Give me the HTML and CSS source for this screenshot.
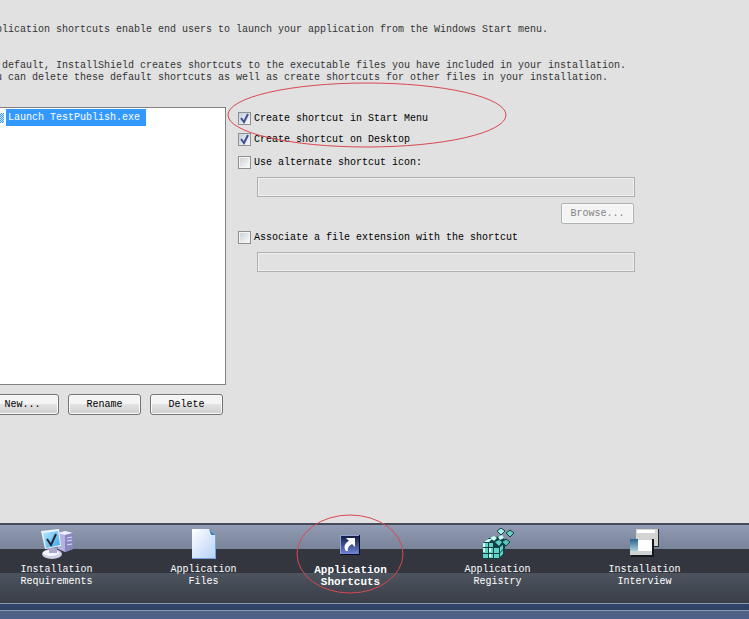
FILE: index.html
```html
<!DOCTYPE html>
<html lang="en">
<head>
    <meta charset="UTF-8">
    <meta name="viewport" content="width=device-width, initial-scale=1.0">
    <title>Application Shortcuts</title>
    <link rel="stylesheet" href="styles.css">
</head>
<body>
    <main class="content">
        <p class="intro">Application shortcuts enable end users to launch your application from the Windows Start menu.</p>
        <p class="intro">By default, InstallShield creates shortcuts to the executable files you have included in your installation.<br>
        You can delete these default shortcuts as well as create shortcuts for other files in your installation.</p>

        <div class="columns">
            <div class="shortcuts">
                <ul class="shortcut-list">
                    <li class="selected"><span class="file-icon"></span><span class="file-name">Launch TestPublish.exe</span></li>
                </ul>
                <div class="button-group">
                    <button type="button">New...</button>
                    <button type="button">Rename</button>
                    <button type="button">Delete</button>
                </div>
            </div>

            <form class="options">
                <div class="marked">
                    <label class="option"><input type="checkbox" checked>Create shortcut in Start Menu</label>
                    <label class="option"><input type="checkbox" checked>Create shortcut on Desktop</label>
                    <svg class="mark mark-options" viewBox="0 0 280 67"><ellipse cx="140" cy="33" rx="139" ry="32"/></svg>
                </div>
                <label class="option option-field"><input type="checkbox">Use alternate shortcut icon:</label>
                <input class="field" type="text" aria-label="Alternate shortcut icon" disabled>
                <button class="browse" type="button" disabled>Browse...</button>
                <label class="option option-field"><input type="checkbox">Associate a file extension with the shortcut</label>
                <input class="field" type="text" aria-label="File extension" disabled>
            </form>
        </div>
    </main>

    <nav class="steps">
        <div class="step-row">
            <a class="step" href="#requirements">
                <svg width="34" height="32" viewBox="0 0 34 32">
                    <defs>
                        <linearGradient id="screen" x1="0" y1="0" x2="1" y2="1"><stop offset="0" stop-color="#b9ecff"/><stop offset="1" stop-color="#38a2ec"/></linearGradient>
                    </defs>
                    <path d="M18 5l7-2 8 2v16l-8 3-7-3z" fill="#b5b4e0"/>
                    <path d="M18 5l7-2 8 2-8 2z" fill="#eeecff"/>
                    <path d="M25 7l8-2v16l-8 3z" fill="#8a87c0"/>
                    <path d="M27 10l5-1M27 13l5-1M27 17l5-1" stroke="#dcdaf8"/>
                    <ellipse cx="12" cy="26" rx="10" ry="5" fill="#d0d0e6"/>
                    <ellipse cx="11" cy="25" rx="8" ry="3" fill="#f7f7ff"/>
                    <path d="M9 20h8v5H9z" fill="#aaa8ce"/>
                    <path d="M1 3l18-2 2 17-16 3z" fill="#e8f4ff"/>
                    <path d="M3 5l15-2 2 14-14 3z" fill="url(#screen)"/>
                    <path d="M7 11l4 6 5-11" fill="none" stroke="#272536" stroke-width="2"/>
                </svg>
                <span>Installation<br>Requirements</span>
            </a>
            <a class="step" href="#files">
                <svg width="34" height="32" viewBox="0 0 34 32">
                    <defs>
                        <linearGradient id="paper" x1="0" y1="0" x2="1" y2="1"><stop offset="0" stop-color="#fff"/><stop offset="1" stop-color="#b4d0f8"/></linearGradient>
                    </defs>
                    <path d="M5 1h17l7 6v24H5z" fill="url(#paper)"/>
                    <path d="M28.500 7v23.500H5" fill="none" stroke="#7c9fda"/>
                    <path d="M22 1l7 6h-5z" fill="#4a82b8"/>
                </svg>
                <span>Application<br>Files</span>
            </a>
            <a class="step current" href="#shortcuts">
                <svg width="34" height="32" viewBox="0 0 34 32">
                    <defs>
                        <linearGradient id="arrow-bg" x1="0" y1="0" x2="0" y2="1"><stop offset="0" stop-color="#111d45"/><stop offset="1" stop-color="#7185d6"/></linearGradient>
                    </defs>
                    <path d="M6 7h20v20H6z" fill="#080c20"/>
                    <path d="M6 7h19v19H6z" fill="#95a5d7"/>
                    <path d="M7 8h18v18H7z" fill="url(#arrow-bg)"/>
                    <path d="M12 10h9v9l-3-3c-3 2-5 4-4 7h-2c-3-4-1-8 3-10z" fill="#fff"/>
                </svg>
                <span>Application<br>Shortcuts</span>
                <svg class="mark mark-step" viewBox="0 0 108 82"><ellipse cx="54" cy="41" rx="53" ry="39"/></svg>
            </a>
            <a class="step" href="#registry">
                <svg width="34" height="32" viewBox="0 0 34 32">
                    <path d="M2 15l6-5 13-2 4 5-2 13-5 5H2z" fill="#123f44"/>
                    <g fill="#5fd3c8">
                        <path d="M2 15h5v4H2zM8 15h4v4H8zM2 20h5v5H2zM8 20h4v5H8zM13 20h5v5h-5zM2 26h5v4H2zM8 26h4v4H8zM13 26h5v4h-5z"/>
                        <path d="M19 19l3-2v4l-3 3zM19 25l3-3v4l-3 3zM14 14l4-2 3 2-3 4z"/>
                    </g>
                    <path d="M3 14l4-3h4l-3 3zM9 10l4-2 3 2-3 3zM17 9l4-2 2 3-4 2zM2 15h2v4H2zM2 20h2v4H2zM8 20h2v4H8zM8 26h2v3H8z" fill="#cafff4"/>
                    <g stroke="#123f44">
                        <path d="M20 0l4 3-4 4-4-4z" fill="#a4eee5"/>
                        <path d="M29 2l4 3-4 4-4-4z" fill="#66cfc4"/>
                        <path d="M25 11l4 3-4 4-4-4z" fill="#55c4bc"/>
                    </g>
                </svg>
                <span>Application<br>Registry</span>
            </a>
            <a class="step" href="#interview">
                <svg width="34" height="32" viewBox="0 0 34 32">
                    <defs>
                        <linearGradient id="side" x1="0" y1="0" x2="0" y2="1"><stop offset="0" stop-color="#286393"/><stop offset="1" stop-color="#adced9"/></linearGradient>
                    </defs>
                    <path d="M9 1h22v18H9z" fill="#252a30"/>
                    <path d="M8 1h22v17H8z" fill="#d4d4d2"/>
                    <path d="M9 2h18v3H9z" fill="#fff"/>
                    <path d="M3 11h23v18H3z" fill="#16191e"/>
                    <path d="M2 11h22v16H2z" fill="#d0d2d2"/>
                    <path d="M10 12h14v11H10z" fill="#fff"/>
                    <path d="M2 11h8v12H2z" fill="url(#side)"/>
                </svg>
                <span>Installation<br>Interview</span>
            </a>
        </div>
    </nav>
    <footer class="status"></footer>
</body>
</html>
```

FILE: styles.css
```css
* {
    box-sizing: border-box;
}
body {
    font-family: "Liberation Mono", monospace;
    font-size: 10px;
    line-height: 12px;
    color: #000;
    background-color: #e1e1e1;
    display: flex;
    flex-direction: column;
    min-height: 100vh;
    margin: 0;
    overflow-x: hidden;
}
/* the panel runs off the left edge of the window */
.content {
    flex: 1;
    margin-left: -16px;
    padding-top: 24px;
}
.intro {
    margin: 0 0 24px;
    color: #333;
    white-space: nowrap;
}
.intro + .intro {
    margin-bottom: 23px;
}
.columns {
    display: flex;
    gap: 12px;
}
.shortcuts {
    width: 242px;
}
.shortcut-list {
    height: 278px;
    margin: 0 0 9px;
    padding: 1px 1px 1px 15px;
    list-style: none;
    background-color: #fff;
    border: 1px solid #828282;
}
.selected {
    display: flex;
    align-items: center;
    height: 17px;
}
.file-icon {
    width: 4px;
    height: 10px;
    background: repeating-conic-gradient(#3399ff 0 25%, #d5eaff 0 50%) 0 0 / 2px 2px;
}
.file-name {
    padding: 3px 6px 2px 2px;
    margin-left: 2px;
    color: #fff;
    background-color: #3399ff;
}
.button-group {
    display: flex;
    justify-content: flex-end;
    gap: 9px;
    padding-right: 3px;
}
button {
    width: 73px;
    height: 21px;
    padding: 0;
    font: inherit;
    color: #000;
    background: linear-gradient(#f4f4f4 0 45%, #e2e2e2 50%, #cfcfcf);
    border: 1px solid #747474;
    border-radius: 3px;
    box-shadow: inset 0 0 0 1px #fafafa;
}
button:disabled {
    color: #838383;
    background: #f4f4f4;
    border-color: #adb2b5;
}
.options {
    display: flex;
    flex-direction: column;
    width: 397px;
    padding-top: 4px;
}
.marked {
    position: relative;
    display: flex;
    flex-direction: column;
    gap: 6px;
}
.option {
    display: flex;
    align-items: center;
    gap: 3px;
    height: 15px;
}
.option-field {
    margin-top: 8px;
}
.option input {
    appearance: none;
    width: 13px;
    height: 13px;
    margin: 0;
    border: 1px solid #8e8f8f;
    background: linear-gradient(135deg, #cfd3d8, #f8f8f8) content-box, #f4f4f4;
    padding: 1px;
}
.option input:checked {
    background: url("data:image/svg+xml,%3Csvg xmlns='http://www.w3.org/2000/svg' viewBox='0 0 11 11'%3E%3Cpath d='M2 5l3 4 4-8' fill='none' stroke='%23434d91' stroke-width='2'/%3E%3C/svg%3E") padding-box, linear-gradient(135deg, #c4d0df, #f5f8fa);
}
.field {
    height: 20px;
    margin: 7px 0 0 19px;
    padding: 0 4px;
    font: inherit;
    background-color: #e1e1e1;
    border: 1px solid #afafaf;
    box-shadow: inset 0 0 0 1px #f0f0f0;
}
.browse {
    align-self: flex-end;
    margin: 6px 1px 0 0;
    border-radius: 2px;
}
.browse + .option-field {
    margin-top: 6px;
}
.mark {
    position: absolute;
    overflow: visible;
    fill: none;
    stroke: #d9484f;
    pointer-events: none;
}
.mark-options {
    top: -29px;
    left: -11px;
    width: 280px;
    height: 67px;
}
.mark-step {
    top: -12px;
    left: 19px;
    width: 108px;
    height: 82px;
}
.steps {
    height: 80px;
    border-top: 2px solid #454b5b;
    background: linear-gradient(#919bb3 0, #78849a 24px, #33363f 24px, #33363f 48px, #4d545f 48px, #393e47 78px);
}
.step-row {
    display: grid;
    grid-template-columns: repeat(5, 147px);
    margin-left: -17px;
}
.step {
    position: relative;
    display: flex;
    flex-direction: column;
    align-items: center;
    gap: 4px;
    padding-top: 3px;
    color: #fff;
    text-align: center;
    text-decoration: none;
}
.current {
    font-size: 11px;
    font-weight: bold;
}
.status {
    height: 16px;
    border-top: 1px solid #8c99b0;
    background: linear-gradient(#2e4366 6px, #8c99b0 6px, #8c99b0 7px, #4d6286 7px);
}
```
